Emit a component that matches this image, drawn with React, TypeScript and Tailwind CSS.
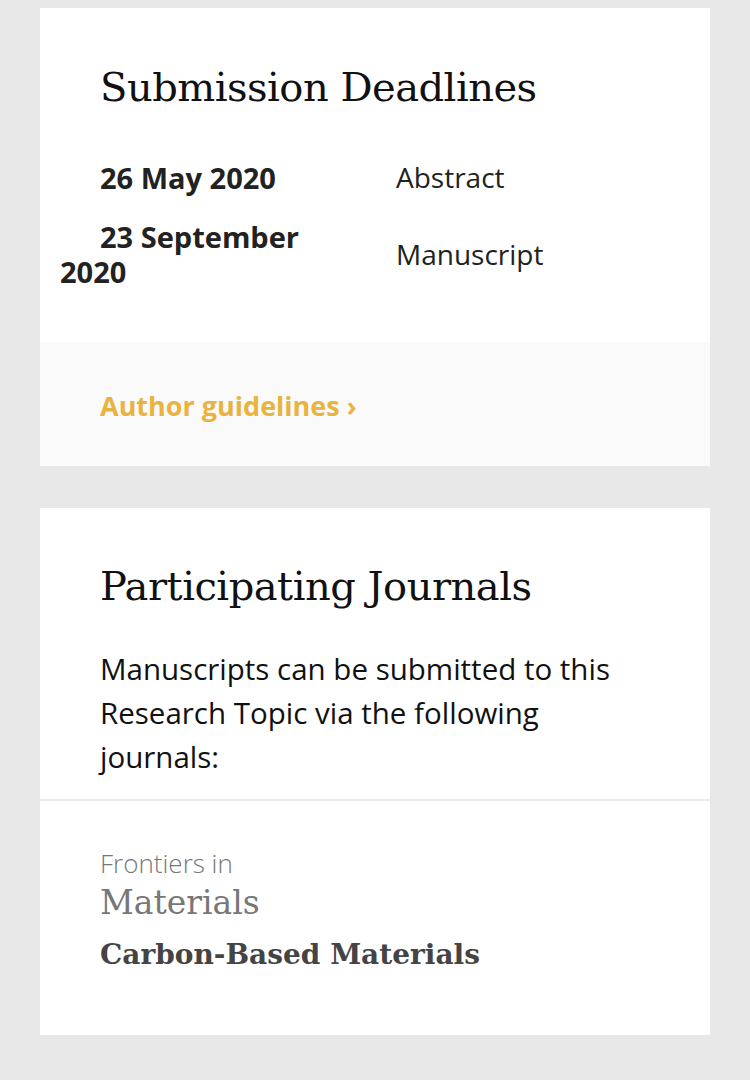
const sans = { fontFamily: '"Open Sans", Lato, sans-serif' };
const serif = { fontFamily: '"DejaVu Serif", "Liberation Serif", serif' };

const deadlines = [
  { date: '26 May 2020', label: 'Abstract' },
  { date: '23 September 2020', label: 'Manuscript' },
];

export default function App() {
  return (
    <div className="min-h-[1080px] bg-[#e8e8e8] pt-2 pb-12" style={sans}>
      <div className="mx-10 bg-white">
        <div className="px-5 pt-[55px] pb-[41px]">
          <h2 className="pl-10 text-[40px] leading-[48px] text-[#111] tracking-[-0.5px]" style={serif}>
            Submission Deadlines
          </h2>
          <table className="mt-[37px] w-full border-collapse">
            <tbody>
              {deadlines.map((d) => (
                <tr key={d.label}>
                  <td className="w-[336px] py-[12px] pr-[60px] indent-10 text-[29px] leading-[35px] font-bold text-[#222] align-middle">
                    {d.date}
                  </td>
                  <td className="py-[12px] text-[28px] leading-[35px] text-[#222] align-middle">
                    {d.label}
                  </td>
                </tr>
              ))}
            </tbody>
          </table>
        </div>
        <div className="bg-[#fafafa] pl-[60px] pt-[48px] pb-[44px]">
          <a className="text-[27px] leading-[32px] font-bold text-[#e8b33f]">Author guidelines ›</a>
        </div>
      </div>

      <div className="mx-10 mt-[42px] bg-white">
        <div className="px-[60px] pt-[54px] pb-[20px] border-b-2 border-[#ebebeb]">
          <h2 className="text-[40px] leading-[48px] text-[#111] tracking-[-0.5px]" style={serif}>
            Participating Journals
          </h2>
          <p className="mt-[37px] text-[29.5px] leading-[44px] text-[#111]">
            Manuscripts can be submitted to this Research Topic via the following journals:
          </p>
        </div>
        <div className="px-[60px] pt-[46px] pb-[60px]">
          <div className="text-[26px] leading-[32px] font-light text-[#777]">Frontiers in</div>
          <div className="mt-[3px] text-[33px] leading-[42px] font-light text-[#777]" style={serif}>
            Materials
          </div>
          <div className="mt-[11px] text-[28px] leading-[40px] font-bold text-[#444]" style={serif}>
            Carbon-Based Materials
          </div>
        </div>
      </div>
    </div>
  );
}
